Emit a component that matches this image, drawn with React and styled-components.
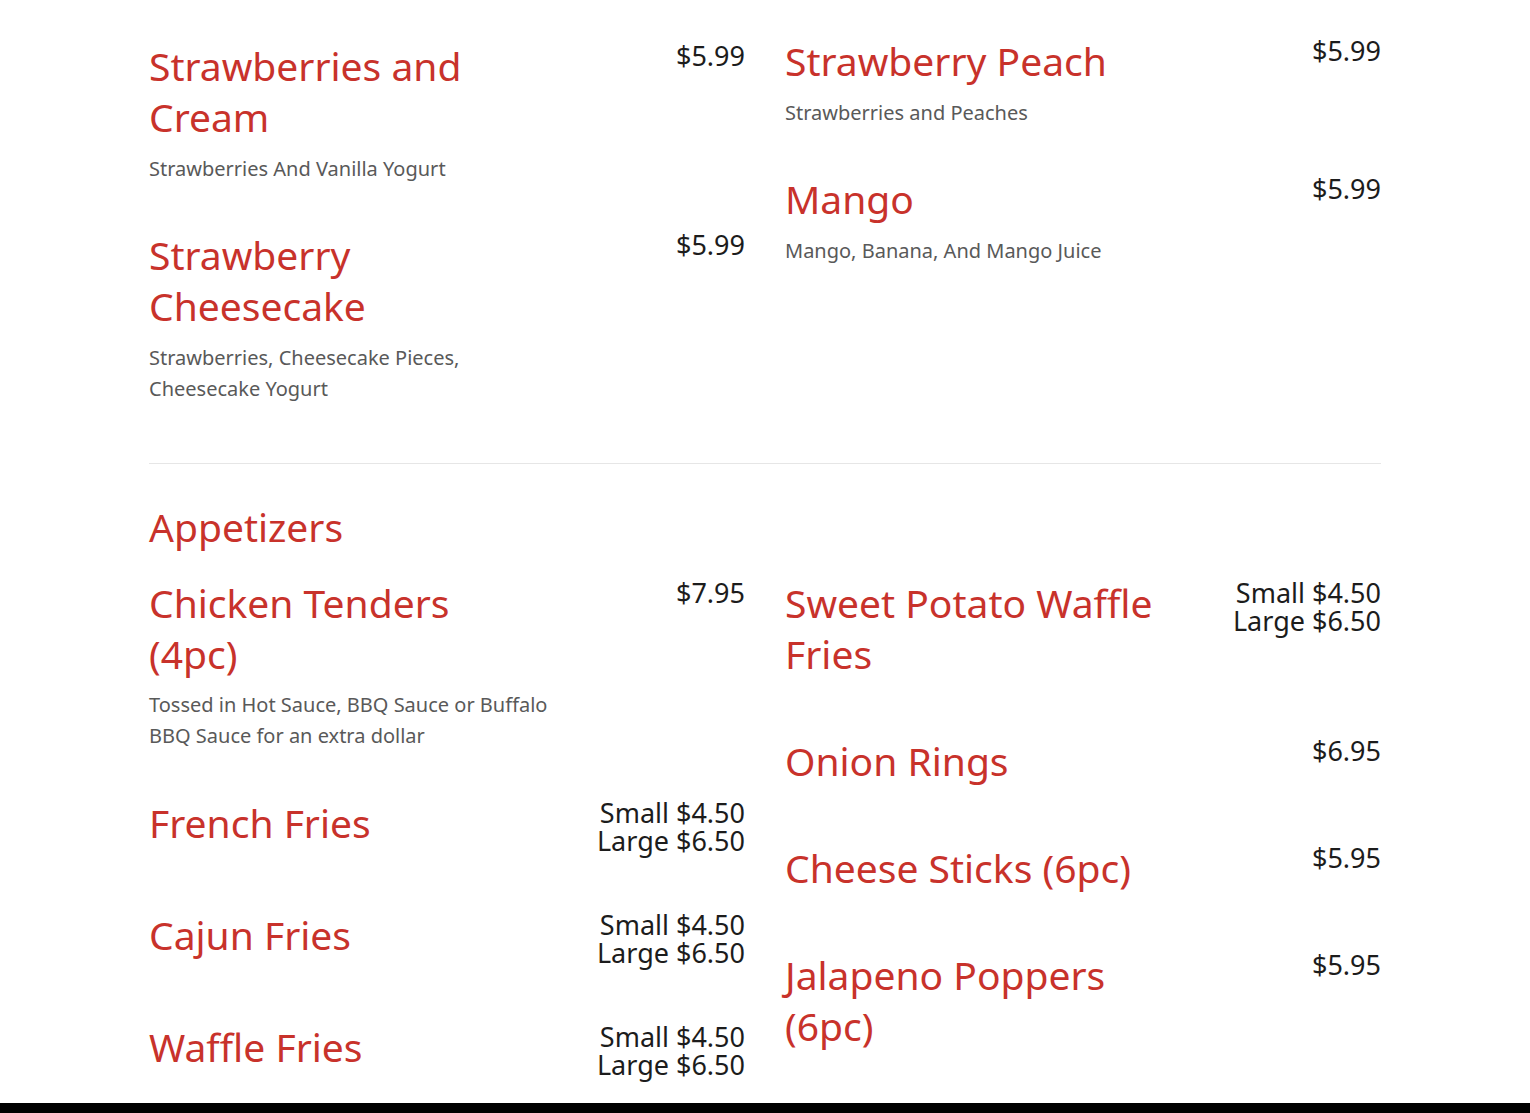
import React from 'react';
import styled, { createGlobalStyle } from 'styled-components';

const GlobalStyle = createGlobalStyle`
  html, body {
    margin: 0;
    padding: 0;
    background: #ffffff;
  }
  body {
    font-family: "Noto Sans", "Open Sans", "DejaVu Sans", sans-serif;
    -webkit-font-smoothing: antialiased;
  }
`;

const Page = styled.main`
  width: 1232px;
  margin: 0 auto;
  padding-top: 35px;
  padding-bottom: 40px;
`;

const Section = styled.section``;

const SectionTitle = styled.h2`
  margin: 0 0 25px;
  font-size: 39px;
  line-height: 51px;
  font-weight: 400;
  color: #c8322b;
`;

const Columns = styled.div`
  display: grid;
  grid-template-columns: 1fr 1fr;
  column-gap: 40px;
  align-items: start;
`;

const Column = styled.div`
  display: flex;
  flex-direction: column;
  gap: 45.5px;
  padding-top: ${(p) => p.$shift || 0}px;
`;

const Item = styled.article`
  display: flex;
  justify-content: space-between;
  align-items: flex-start;
`;

const Info = styled.div`
  flex: 1 1 auto;
  min-width: 0;
`;

const Name = styled.h3`
  margin: 0 0 10.5px;
  max-width: 395px;
  font-size: 39px;
  line-height: 51px;
  font-weight: 400;
  color: #c8322b;
`;

const Desc = styled.p`
  margin: 0;
  max-width: 412px;
  font-size: 20px;
  line-height: 31px;
  color: #595959;
`;

const Price = styled.div`
  flex: 0 0 auto;
  padding-top: 2px;
  margin-bottom: 8.5px;
  font-size: 27px;
  line-height: 28px;
  color: #1c1c1c;
  text-align: right;
  white-space: nowrap;
`;

const PriceLine = styled.div`
  display: block;
`;

const Divider = styled.hr`
  border: 0;
  border-top: 1px solid #e6e6e6;
  margin: 59px 0 37px;
`;

const BottomBar = styled.div`
  position: fixed;
  left: 0;
  right: 0;
  bottom: 0;
  height: 10px;
  background: #000000;
`;

const smoothies = [
  [
    { name: 'Strawberries and Cream', desc: 'Strawberries And Vanilla Yogurt', price: ['$5.99'] },
    { name: 'Strawberry Cheesecake', desc: 'Strawberries, Cheesecake Pieces, Cheesecake Yogurt', price: ['$5.99'] },
  ],
  [
    { name: 'Strawberry Peach', desc: 'Strawberries and Peaches', price: ['$5.99'] },
    { name: 'Mango', desc: 'Mango, Banana, And Mango Juice', price: ['$5.99'] },
  ],
];

const sizes = ['Small $4.50', 'Large $6.50'];

const appetizers = [
  [
    { name: 'Chicken Tenders (4pc)', desc: 'Tossed in Hot Sauce, BBQ Sauce or Buffalo BBQ Sauce for an extra dollar', price: ['$7.95'] },
    { name: 'French Fries', price: sizes },
    { name: 'Cajun Fries', price: sizes },
    { name: 'Waffle Fries', price: sizes },
  ],
  [
    { name: 'Sweet Potato Waffle Fries', price: sizes },
    { name: 'Onion Rings', price: ['$6.95'] },
    { name: 'Cheese Sticks (6pc)', price: ['$5.95'] },
    { name: 'Jalapeno Poppers (6pc)', price: ['$5.95'] },
  ],
];

function MenuItem({ item }) {
  return (
    <Item>
      <Info>
        <Name>{item.name}</Name>
        {item.desc && <Desc>{item.desc}</Desc>}
      </Info>
      <Price>
        {item.price.map((p) => (
          <PriceLine key={p}>{p}</PriceLine>
        ))}
      </Price>
    </Item>
  );
}

function MenuColumns({ columns, firstShift }) {
  return (
    <Columns>
      {columns.map((col, i) => (
        <Column key={i} $shift={i === 0 ? firstShift : 0}>
          {col.map((item) => (
            <MenuItem key={item.name} item={item} />
          ))}
        </Column>
      ))}
    </Columns>
  );
}

export default function App() {
  return (
    <>
      <GlobalStyle />
      <Page>
        <Section>
          <MenuColumns columns={smoothies} firstShift={5} />
        </Section>
        <Divider />
        <Section>
          <SectionTitle>Appetizers</SectionTitle>
          <MenuColumns columns={appetizers} firstShift={0} />
        </Section>
      </Page>
      <BottomBar />
    </>
  );
}
